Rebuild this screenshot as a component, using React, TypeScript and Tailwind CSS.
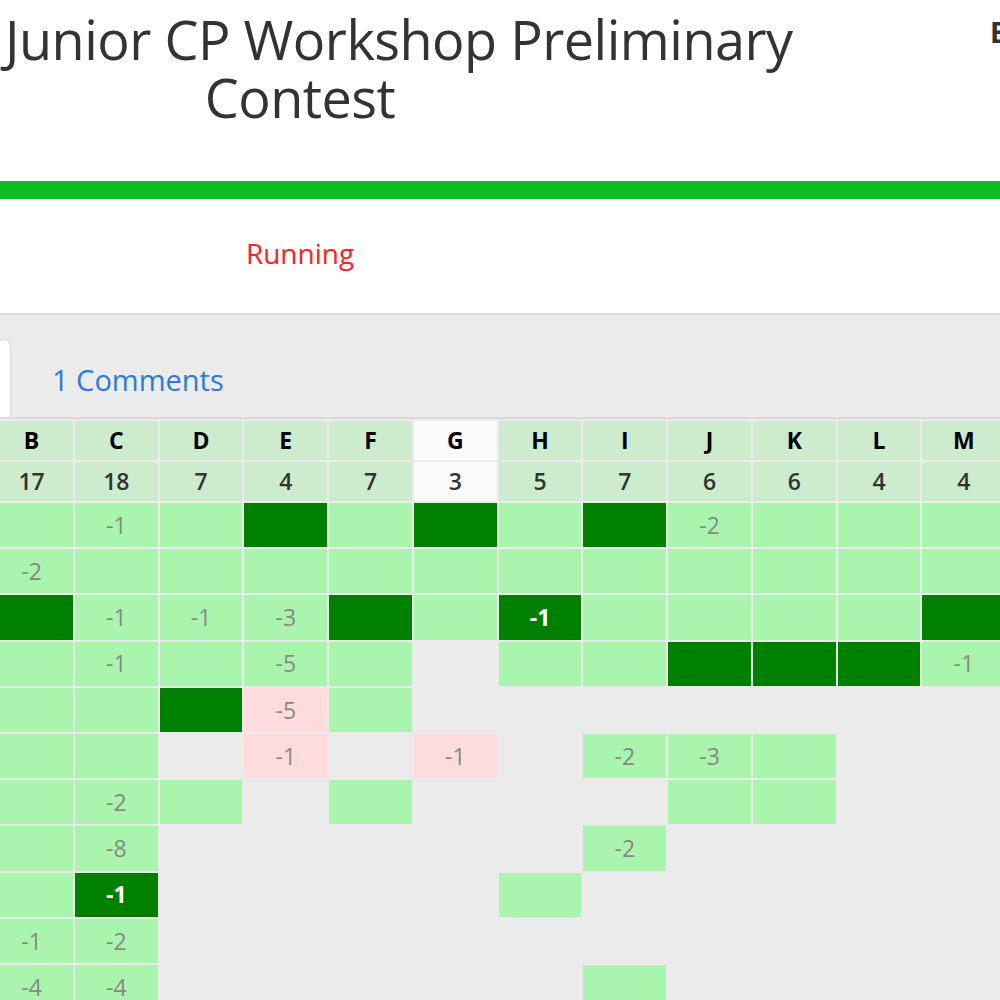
const cols = ["B", "C", "D", "E", "F", "G", "H", "I", "J", "K", "L", "M"];
const counts = ["17", "18", "7", "4", "7", "3", "5", "7", "6", "6", "4", "4"];

// l = accepted (light), d = first solve (dark), p = rejected (pink), "" = no attempt
const rows: string[][] = [
  ["l", "l:-1", "l", "d", "l", "d", "l", "d", "l:-2", "l", "l", "l"],
  ["l:-2", "l", "l", "l", "l", "l", "l", "l", "l", "l", "l", "l"],
  ["d", "l:-1", "l:-1", "l:-3", "d", "l", "d:-1", "l", "l", "l", "l", "d"],
  ["l", "l:-1", "l", "l:-5", "l", "", "l", "l", "d", "d", "d", "l:-1"],
  ["l", "l", "d", "p:-5", "l", "", "", "", "", "", "", ""],
  ["l", "l", "", "p:-1", "", "p:-1", "", "l:-2", "l:-3", "l", "", ""],
  ["l", "l:-2", "l", "", "l", "", "", "", "l", "l", "", ""],
  ["l", "l:-8", "", "", "", "", "", "l:-2", "", "", "", ""],
  ["l", "d:-1", "", "", "", "", "l", "", "", "", "", ""],
  ["l:-1", "l:-2", "", "", "", "", "", "", "", "", "", ""],
  ["l:-4", "l:-4", "", "", "", "", "", "l", "", "", "", ""],
];

const Cell = ({ code }: { code: string }) => {
  const [kind, val] = code.split(":");
  if (kind === "d")
    return (
      <div className="h-[44.2px] bg-[#008000] flex items-center justify-center text-white font-bold">
        {val}
      </div>
    );
  if (kind === "p")
    return (
      <div className="h-[44.2px] bg-[#ffdcdc] flex items-center justify-center text-[#888]">
        {val}
      </div>
    );
  if (kind === "l")
    return (
      <div className="h-[44.2px] bg-[#a9f5ad] flex items-center justify-center text-[#888]">
        {val}
      </div>
    );
  return <div className="h-[44.2px]" />;
};

const App = () => {
  return (
    <div className="w-[1000px] h-[1000px] overflow-hidden bg-[#ebebeb] font-['Open_Sans',sans-serif]">
      <div className="bg-white">
        <div className="flex pt-[10px] h-[181px]">
          <div className="w-[590px] ml-[5px] text-center text-[54px] leading-[58px] tracking-[-0.5px] text-[#333]">
            <div className="whitespace-nowrap">Junior CP Workshop Preliminary</div>
            <div>Contest</div>
          </div>
          <div className="ml-[395px] mt-[8px] text-[28px] leading-none font-bold text-[#333] whitespace-nowrap">
            Enter
          </div>
        </div>
        <div className="h-[18px] bg-[#0cbd26]" />
        <div className="h-[114px] flex">
          <div className="w-[590px] ml-[5px] text-center pt-[33px] text-[28px] text-[#ff2020]">Running</div>
        </div>
      </div>
      <div className="h-[2px] bg-[#dcdcdc]" />
      <div className="flex items-end h-[104px] border-b-2 border-[#dadada]">
        <div className="w-[11px] h-[78px] bg-white border-r border-t border-[#dadada] rounded-tr-[7px]" />
        <div className="self-center ml-[41px] mt-[28px] text-[29px] text-[#2a7ae2]">1 Comments</div>
      </div>
      <div className="ml-[-9.8px] mt-[2px] grid grid-cols-[repeat(12,82.7px)] gap-x-[2.07px] gap-y-[2px] text-[23px]">
        {cols.map((c) => (
          <div
            key={c}
            className={`h-[39px] flex items-center justify-center font-bold text-black ${
              c === "G" ? "bg-[#fafafa]" : "bg-[#cdeccd]"
            }`}
          >
            {c}
          </div>
        ))}
        {counts.map((n, i) => (
          <div
            key={i}
            className={`h-[39px] flex items-center justify-center font-semibold text-[#333] ${
              cols[i] === "G" ? "bg-[#fafafa]" : "bg-[#cdeccd]"
            }`}
          >
            {n}
          </div>
        ))}
        {rows.map((r, ri) => r.map((code, ci) => <Cell key={`${ri}-${ci}`} code={code} />))}
      </div>
    </div>
  );
};

export default App;
